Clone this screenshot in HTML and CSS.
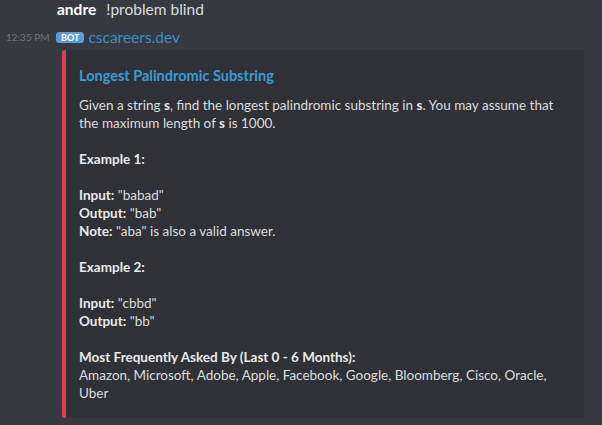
FILE: index.html
```html
<!DOCTYPE html>
<html>
<head>
<meta charset="utf-8">
<link rel="stylesheet" href="styles.css">
</head>
<body>
<div class="chat">
  <div class="msg first">
    <div class="gutter"></div>
    <div class="content">
      <span class="author">andre</span><span class="text">!problem blind</span>
    </div>
  </div>
  <div class="msg">
    <div class="gutter"><span class="time">12:35 PM</span></div>
    <div class="content">
      <div class="head"><span class="bot">BOT</span><span class="botname">cscareers.dev</span></div>
      <div class="embed">
        <div class="title">Longest Palindromic Substring</div>
        <div class="desc">
          <p>Given a string <b>s</b>, find the longest palindromic substring in <b>s</b>. You may assume that the maximum length of <b>s</b> is 1000.</p>
          <p><b>Example 1:</b></p>
          <p><b>Input:</b> "babad"<br><b>Output:</b> "bab"<br><b>Note:</b> "aba" is also a valid answer.</p>
          <p><b>Example 2:</b></p>
          <p><b>Input:</b> "cbbd"<br><b>Output:</b> "bb"</p>
          <p class="last"><b>Most Frequently Asked By (Last 0 - 6 Months):</b><br>Amazon, Microsoft, Adobe, Apple, Facebook, Google, Bloomberg, Cisco, Oracle, Uber</p>
        </div>
      </div>
    </div>
  </div>
</div>
</body>
</html>
```
FILE: styles.css
```css
html, body {
  margin: 0;
  padding: 0;
  background: #36393f;
  font-family: Lato, "Noto Sans", sans-serif;
  color: #dcddde;
  overflow: hidden;
}
.msg {
  display: flex;
}
.gutter {
  width: 56px;
  flex: none;
  position: relative;
}
.time {
  position: absolute;
  left: 6px;
  top: 5px;
  font-size: 10px;
  line-height: 12px;
  color: #72767d;
  white-space: nowrap;
}
.content {
  flex: 1;
}
.first .content {
  height: 26px;
  line-height: 19px;
  font-size: 15.5px;
}
.author {
  color: #ffffff;
  font-weight: 700;
  margin-left: 1px;
  margin-right: 10px;
}
.text {
  color: #dcddde;
}
.head {
  display: flex;
  align-items: center;
  height: 22px;
}
.bot {
  background: #5b9bd9;
  color: #fff;
  font-size: 9px;
  font-weight: 700;
  line-height: 11px;
  height: 11px;
  padding: 0 5px;
  border-radius: 3px;
  margin-right: 4px;
  display: inline-block;
}
.botname {
  color: #3d8ec4;
  font-size: 15.5px;
  line-height: 20px;
}
.embed {
  margin-left: 6px;
  margin-top: 2px;
  width: 489px;
  background: #2f3136;
  border-left: 4px solid #e03c52;
  border-radius: 3px;
  padding: 16px 16px 16px 13px;
}
.title {
  color: #3a9bd8;
  font-weight: 700;
  font-size: 14.5px;
  line-height: 20px;
  margin-bottom: 10px;
}
.desc {
  font-size: 13.5px;
  line-height: 18px;
  color: #dcddde;
}
.desc p {
  margin: 0 0 18px 0;
}
.desc p.last {
  margin-bottom: 0;
}
.desc b {
  color: #e9eaeb;
  font-weight: 700;
}
```
